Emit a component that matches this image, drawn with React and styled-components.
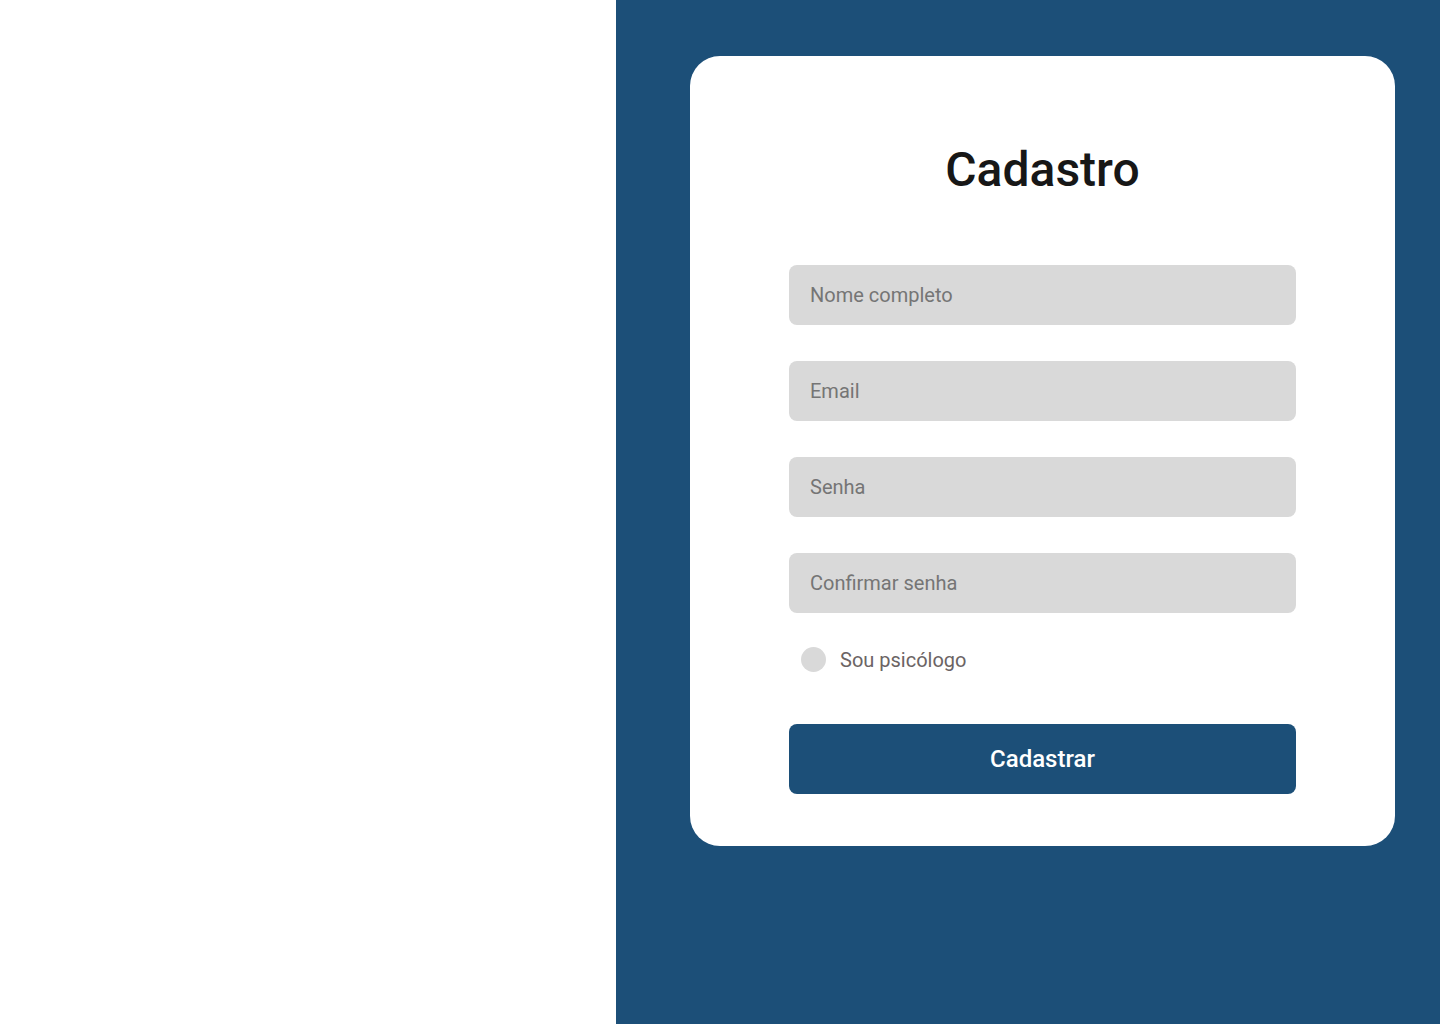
import React from 'react'
import styled, { createGlobalStyle } from 'styled-components'

const GlobalStyle = createGlobalStyle`
  * {
    box-sizing: border-box;
  }

  body {
    margin: 0;
    font-family: Roboto, 'Liberation Sans', sans-serif;
    background: #ffffff;
  }
`

const Page = styled.main`
  display: flex;
  min-height: 1024px;
`

const Side = styled.section`
  width: 616px;
  background: #ffffff;
`

const Panel = styled.section`
  flex: 1;
  background: #1c4f78;
  padding: 56px 45px 0 74px;
`

const Card = styled.form`
  width: 705px;
  height: 790px;
  background: #ffffff;
  border-radius: 30px;
  padding: 86px 99px 52px;
  display: flex;
  flex-direction: column;
`

const Title = styled.h1`
  margin: 0 0 67px;
  text-align: center;
  font-size: 48px;
  font-weight: 500;
  line-height: 56px;
  color: #171717;
`

const Fields = styled.div`
  display: flex;
  flex-direction: column;
  gap: 36px;
`

const Input = styled.input`
  height: 60px;
  width: 100%;
  border: none;
  border-radius: 8px;
  background: #d9d9d9;
  padding: 0 21px;
  font-family: inherit;
  font-size: 20px;
  color: #333;
  outline: none;

  ::placeholder {
    color: #6b6464;
  }
`

const Check = styled.label`
  display: flex;
  align-items: center;
  gap: 14px;
  margin: 34px 0 0 12px;
  font-size: 20px;
  color: #6b6464;
  cursor: pointer;
`

const Dot = styled.span`
  width: 25px;
  height: 25px;
  border-radius: 50%;
  background: #d9d9d9;
`

const Button = styled.button`
  margin-top: 52px;
  height: 70px;
  width: 100%;
  border: none;
  border-radius: 8px;
  background: #1c4f78;
  color: #ffffff;
  font-family: inherit;
  font-size: 24px;
  font-weight: 500;
  cursor: pointer;
`

export default function App() {
  return (
    <>
      <GlobalStyle />
      <Page>
        <Side />
        <Panel>
          <Card onSubmit={(e) => e.preventDefault()}>
            <Title>Cadastro</Title>
            <Fields>
              <Input placeholder="Nome completo" />
              <Input placeholder="Email" type="email" />
              <Input placeholder="Senha" type="password" />
              <Input placeholder="Confirmar senha" type="password" />
            </Fields>
            <Check>
              <Dot />
              Sou psicólogo
            </Check>
            <Button type="submit">Cadastrar</Button>
          </Card>
        </Panel>
      </Page>
    </>
  )
}
